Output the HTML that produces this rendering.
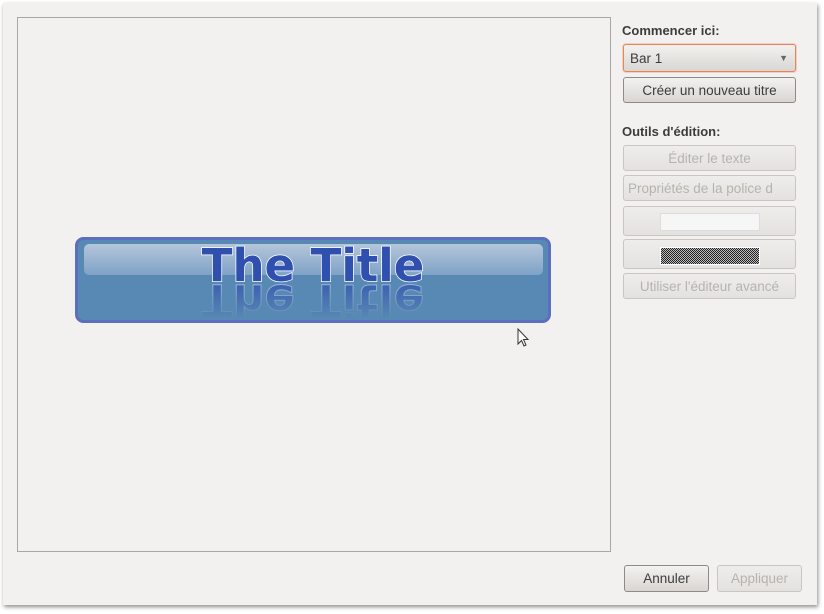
<!DOCTYPE html>
<html><head><style>
body{margin:0;width:824px;height:614px;background:#fff;position:relative;overflow:hidden;font-family:"Liberation Sans",sans-serif;}
.win{position:absolute;left:3px;top:3px;width:814px;height:602px;background:#f2f1f0;box-shadow:1px 2px 4px rgba(0,0,0,.45);}
.frame{position:absolute;left:17px;top:17px;width:592px;height:533px;border:1px solid #a9a7a4;background:#f2f1f0;}
.lbl{position:absolute;left:622px;font-size:13px;font-weight:bold;color:#3c3c3c;}
.btn{position:absolute;left:623px;width:171px;height:24px;border:1px solid #c9c6c2;border-radius:3px;background:linear-gradient(#eeedeb,#e4e2df);font-size:13.5px;color:#b6b3af;text-align:center;line-height:24px;white-space:nowrap;overflow:hidden;}
.act{border-color:#8e8b87;background:linear-gradient(#f3f2f0,#d9d6d2);color:#3c3c3c;}
</style></head><body>
<div class="win"></div>
<div class="frame"></div>
<svg style="position:absolute;left:0;top:0" width="824" height="614">
<defs>
<linearGradient id="g" x1="0" y1="0" x2="0" y2="1"><stop offset="0" stop-color="#b4c6da"/><stop offset="1" stop-color="#7fa2c6"/></linearGradient>
<linearGradient id="mg" gradientUnits="userSpaceOnUse" x1="0" y1="284" x2="0" y2="318"><stop offset="0" stop-color="#fff" stop-opacity=".7"/><stop offset="1" stop-color="#fff" stop-opacity="0"/></linearGradient>
<mask id="m" maskUnits="userSpaceOnUse" x="0" y="0" width="824" height="614"><rect x="0" y="284" width="824" height="34" fill="url(#mg)"/></mask>
</defs>
<rect x="76.5" y="238.5" width="473" height="83" rx="7" fill="#5888b4" stroke="#5b6fbe" stroke-width="3"/>
<rect x="84" y="244" width="459" height="31" rx="5" fill="url(#g)"/>
<g mask="url(#m)"><text x="313" y="-285" transform="scale(1,-1)" text-anchor="middle" font-family="DejaVu Sans" font-weight="bold" font-size="45" fill="#3050b0" stroke="#fff" stroke-opacity=".6" stroke-width="1">The Title</text></g>
<text x="313" y="281" text-anchor="middle" font-family="DejaVu Sans" font-weight="bold" font-size="45" fill="#3050b0" stroke="#fff" stroke-width="1.5" paint-order="stroke">The Title</text>
<path d="M518 329 L518 344 L521.5 340.5 L524 346 L526 345 L523.5 339.5 L528 339.5 Z" fill="#fff" stroke="#333" stroke-width="1"/>
</svg>
<div class="lbl" style="top:23px">Commencer ici:</div>
<div class="btn act" style="top:44px;height:26px;line-height:27px;border-color:#e9845a;text-align:left;padding-left:6px;width:165px;box-shadow:0 0 0 1px rgba(233,132,90,.3)">Bar 1<span style="position:absolute;right:7px;top:0;font-size:9px;color:#666">▼</span></div>
<div class="btn act" style="top:77px;line-height:25px">Créer un nouveau titre</div>
<div class="lbl" style="top:124px">Outils d'édition:</div>
<div class="btn" style="top:145px;line-height:25px">Éditer le texte</div>
<div class="btn" style="top:175px;text-align:left;padding-left:4px;width:167px;line-height:25px">Propriétés de la police d</div>
<div class="btn" style="top:206px;height:28px"><div style="position:absolute;left:36px;top:6px;width:98px;height:16px;background:#f6f6f6;border:1px solid #ddd"></div></div>
<div class="btn" style="top:239px;height:28px"><div style="position:absolute;left:36px;top:7px;width:98px;height:16px;background:repeating-conic-gradient(#222 0 25%,#bbb 0 50%) 0 0/2px 2px;border:1px solid #fff"></div></div>
<div class="btn" style="top:273px;line-height:25px">Utiliser l'éditeur avancé</div>
<div class="btn act" style="left:624px;top:565px;width:83px;height:25px;line-height:26px">Annuler</div>
<div class="btn" style="left:717px;top:565px;width:83px;height:25px;line-height:26px">Appliquer</div>
</body></html>
